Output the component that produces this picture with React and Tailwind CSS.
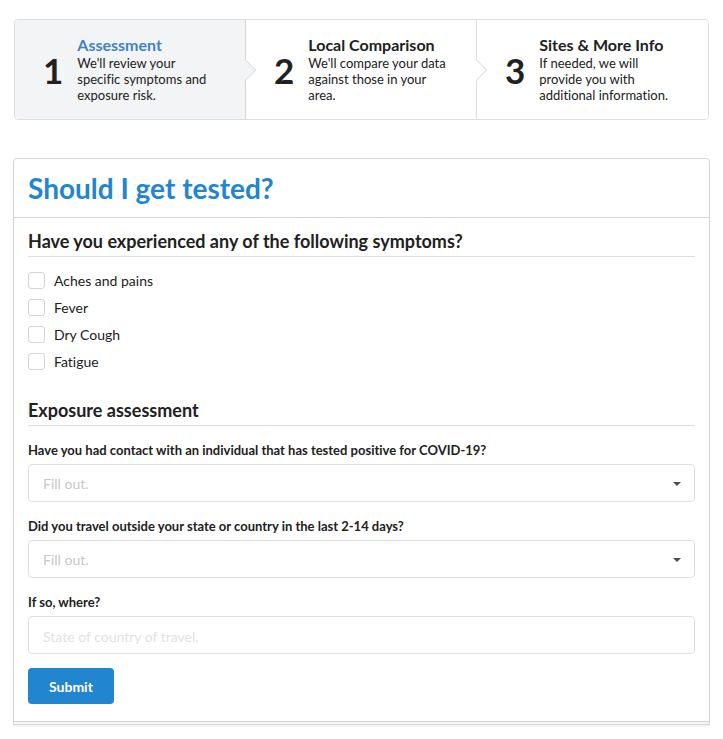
const steps = [
  { number: 1, title: 'Assessment', text: "We'll review your specific symptoms and exposure risk.", active: true },
  { number: 2, title: 'Local Comparison', text: "We'll compare your data against those in your area." },
  { number: 3, title: 'Sites & More Info', text: 'If needed, we will provide you with additional information.' },
];

const symptoms = ['Aches and pains', 'Fever', 'Dry Cough', 'Fatigue'];

function Step({ number, title, text, active, last }) {
  return (
    <li
      aria-current={active ? 'step' : undefined}
      className={`relative flex items-center gap-[14px] px-7 py-4 ${active ? 'border-[#d4d4d5] bg-[#f3f4f5] first:rounded-l' : 'border-[#dededf] bg-white last:rounded-r'} ${last ? '' : 'border-r'}`}
    >
      <span className="text-[35px] leading-9 font-bold">{number}</span>
      <div>
        <h2 className={`mb-px text-base leading-[18px] font-bold ${active ? 'text-[#4183c4]' : ''}`}>{title}</h2>
        <p className="text-[13px] leading-4">{text}</p>
      </div>
      {!last && (
        <span
          aria-hidden="true"
          className={`absolute top-1/2 -right-2 z-10 size-4 -translate-y-1/2 -rotate-45 border-r border-b border-[#dededf] ${active ? 'bg-[#f3f4f5]' : 'bg-white'}`}
        />
      )}
    </li>
  );
}

function SectionTitle({ children }) {
  return <h3 className="border-b border-[#dededf] pb-[3px] text-lg leading-[23px] font-bold">{children}</h3>;
}

function SelectField({ id, label }) {
  return (
    <div>
      <label htmlFor={id} className="mb-1 block text-[13px] leading-5 font-bold">{label}</label>
      <div className="relative">
        <select
          id={id}
          defaultValue=""
          className="block h-[38px] w-full appearance-none rounded border border-[#dededf] bg-white px-[14px] pt-0.5 text-sm text-[#c7c7c7]"
        >
          <option value="">Fill out.</option>
          <option value="yes">Yes</option>
          <option value="no">No</option>
        </select>
        <svg viewBox="0 0 8 4" className="pointer-events-none absolute top-[18px] right-[14px] h-1 w-2" fill="#4d4d4d" aria-hidden="true">
          <path d="M0 0h8L4 4z" />
        </svg>
      </div>
    </div>
  );
}

export default function App() {
  return (
    <main className="px-[14px] pt-[19px] pb-[14px] font-[Lato,'Liberation_Sans',sans-serif] text-sm text-[#212121] [font-variant-ligatures:none]">
      <ol className="grid grid-cols-3 rounded border border-[#dededf]">
        {steps.map((step, i) => (
          <Step key={step.title} {...step} last={i === steps.length - 1} />
        ))}
      </ol>

      <section className="-mx-px mt-[38px] rounded-t border border-[#d4d4d5] bg-[#f7f7f7] pb-0.5 shadow-[0_2px_0_0_#f5f5f5]">
        <div className="rounded-t border-b border-[#d4d4d5] bg-white">
          <header className="border-b border-[#d4d4d5] px-[14px] py-[14px]">
            <h1 className="text-[28px] leading-[30px] font-bold text-[#2185d0]">Should I get tested?</h1>
          </header>

          <form className="px-[14px] pt-3 pb-[17px]" onSubmit={(e) => e.preventDefault()}>
            <SectionTitle>Have you experienced any of the following symptoms?</SectionTitle>
            <div className="mt-[15px] mb-[29px] flex flex-col items-start gap-[10px]">
              {symptoms.map((name) => (
                <label key={name} className="flex items-center gap-[9px] leading-[17px]">
                  <input
                    type="checkbox"
                    className="size-[17px] appearance-none rounded-[3px] border border-[#d4d4d5] bg-white checked:bg-[#2185d0]"
                  />
                  {name}
                </label>
              ))}
            </div>

            <SectionTitle>Exposure assessment</SectionTitle>
            <div className="mt-[14px] flex flex-col gap-[14px]">
              <SelectField id="contact" label="Have you had contact with an individual that has tested positive for COVID-19?" />
              <SelectField id="travel" label="Did you travel outside your state or country in the last 2-14 days?" />
              <div>
                <label htmlFor="where" className="mb-1 block text-[13px] leading-5 font-bold">If so, where?</label>
                <input
                  id="where"
                  type="text"
                  placeholder="State of country of travel."
                  className="block h-[38px] w-full rounded border border-[#dededf] px-[14px] pt-0.5 text-sm placeholder:text-[#e2e2e2]"
                />
              </div>
            </div>
            <button type="submit" className="mt-[14px] h-9 rounded bg-[#2185d0] px-[21px] pt-0.5 text-sm font-bold text-white">
              Submit
            </button>
          </form>
        </div>
      </section>
    </main>
  );
}
